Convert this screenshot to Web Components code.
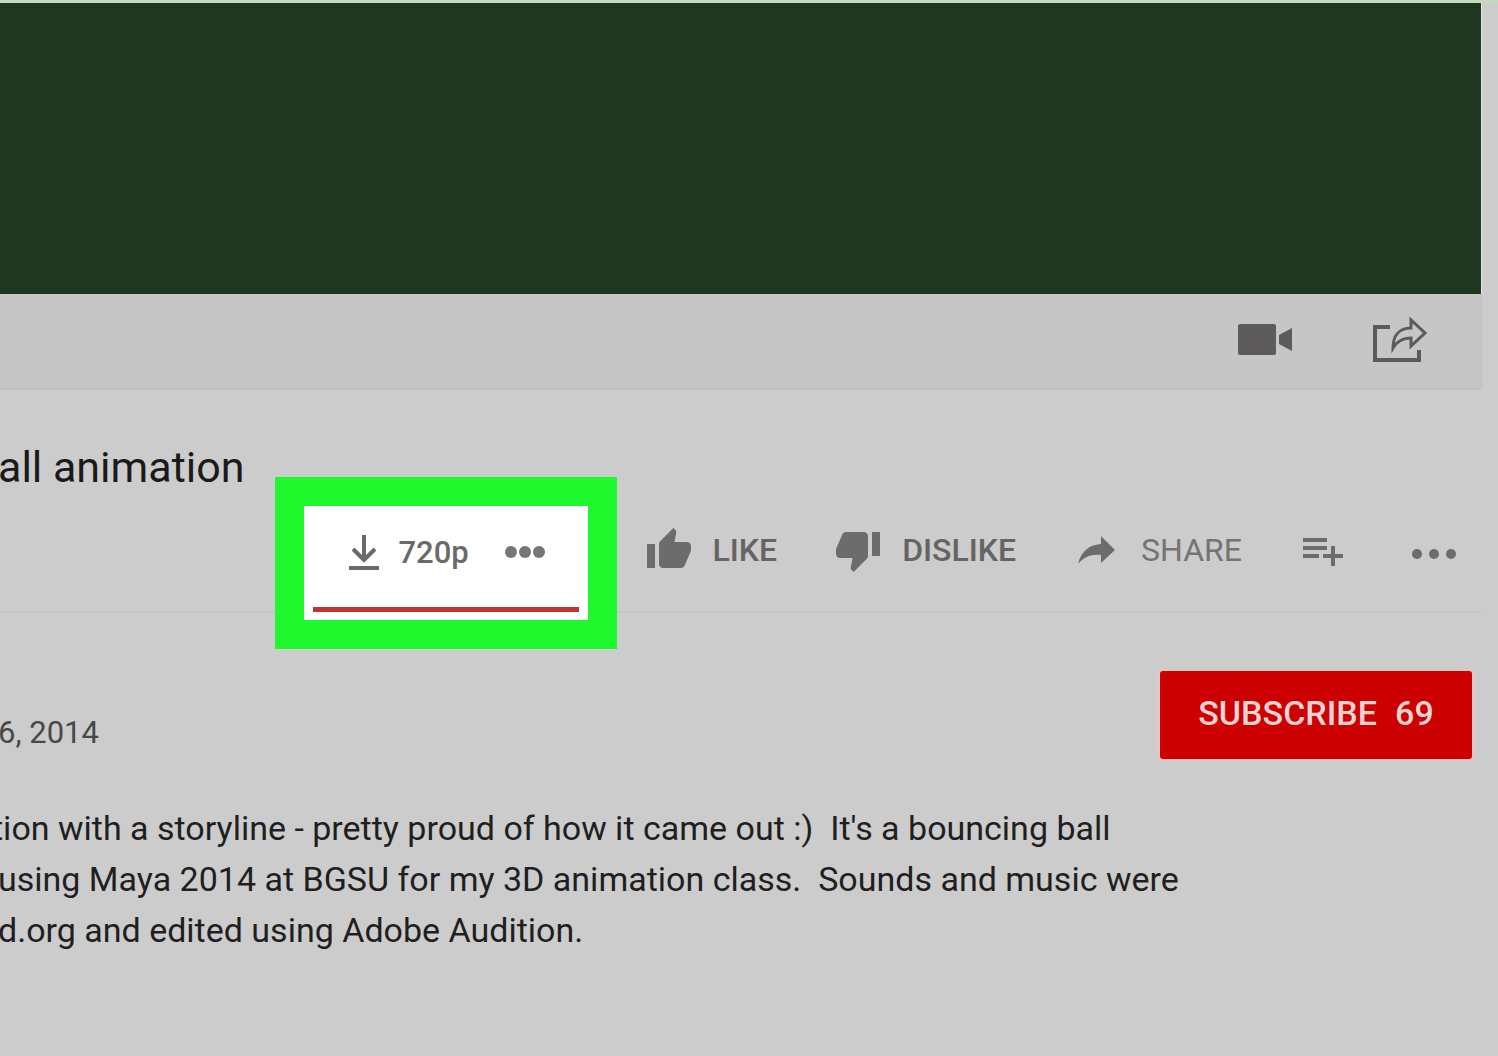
<!DOCTYPE html>
<html lang="en">
<head>
<meta charset="utf-8">
<title>Ball animation</title>
<style>
html, body { margin: 0; min-height: 100%; background: #cccccc; }
body { font-family: Roboto, "Liberation Sans", sans-serif; overflow-x: hidden; }
</style>
</head>
<body>
<watch-page></watch-page>
<script>
const define = (name, html) => {
  const template = document.createElement('template');
  template.innerHTML = html;
  customElements.define(name, class extends HTMLElement {
    constructor() {
      super();
      this.attachShadow({ mode: 'open' }).append(template.content.cloneNode(true));
    }
  });
};

const buttonReset = `button { display: flex; align-items: center; margin: 0; padding: 0; border: 0; background: none; color: inherit; font: inherit; cursor: pointer; }
svg, ::slotted(svg) { display: block; flex: none; }`;

define('video-player', `<style>
:host { display: block; margin-right: 16px; }
.screen { height: 291px; background: #1f3620; border-right: 1px solid #dcebe0; }
.bar { display: flex; justify-content: flex-end; align-items: center; gap: 75px; height: 96px; padding: 0 52px 2px 0; box-sizing: border-box; background: #c7c6c7; border-right: 1px solid #bfbfbf; border-bottom: 2px solid #c0c0c0; border-radius: 0 0 4px 0; color: #5c5a5b; }
${buttonReset}
</style>
<div class="screen"></div>
<div class="bar">
  <button aria-label="Record"><svg width="60" height="60" viewBox="0 0 60 60"><rect x="4" y="14" width="38" height="31" rx="2" fill="currentColor"/><path d="M58 18v23l-13-7v-9z" fill="currentColor"/></svg></button>
  <button aria-label="Share video"><svg width="60" height="60" viewBox="0 0 60 60" fill="none" stroke="currentColor" stroke-width="4"><path d="M21 17H6v33h44V40"/><path d="M42 10v8C30 18 24 26 24 38c4-7 9-10 18-10v8l14-13z" stroke-width="3"/></svg></button>
</div>`);

define('action-button', `<style>
:host { display: block; color: #646464; font-size: 32px; font-weight: 500; line-height: 38px; }
:host([quiet]) { color: #747474; font-weight: 400; }
.body { display: flex; align-items: center; gap: 20px; }
${buttonReset}
button { height: 88px; }
</style><button><span class="body"><slot name="icon"></slot><slot></slot></span></button>`);

define('download-box', `<style>
:host { display: flex; flex-direction: column; justify-content: space-between; box-sizing: border-box; width: 284px; height: 114px; padding: 0 9px 8px; background: #fff; box-shadow: 0 0 0 29px #20f82e; color: #6a6a6a; font-size: 31px; font-weight: 500; }
.row { display: flex; align-items: center; justify-content: space-between; height: 92px; padding: 0 32px 0 33px; }
.line { height: 5px; background: #c13333; }
${buttonReset}
.quality { gap: 17px; }
</style>
<div class="row">
  <button class="quality"><svg width="36" height="40" viewBox="0 0 36 40" fill="none" stroke="currentColor" stroke-width="4"><path d="M18 3v26M7 17l11 11 11-11M3 36h30"/></svg><span>720p</span></button>
  <button aria-label="More formats"><svg width="44" height="20" viewBox="0 0 44 20" fill="#767676"><circle cx="8" cy="10" r="6"/><circle cx="22" cy="10" r="6"/><circle cx="36" cy="10" r="6"/></svg></button>
</div>
<div class="line"></div>`);

define('video-actions', `<style>
:host { display: flex; justify-content: flex-end; align-items: flex-start; gap: 57px; height: 105px; margin-right: 17px; padding-right: 15px; border-bottom: 2px solid #c6c6c6; }
svg { fill: #6c6c6c; display: block; }
</style>
<download-box></download-box>
<action-button><svg slot="icon" width="48" height="48" viewBox="0 0 24 24"><path d="M1 21h4V9H1v12zm22-11c0-1.100-.9-2-2-2h-6.310l.950-4.570.030-.320c0-.410-.170-.790-.440-1.060L14.170 1 7.590 7.590C7.220 7.950 7 8.450 7 9v10c0 1.100.9 2 2 2h9c.830 0 1.540-.5 1.840-1.220l3.020-7.050c.090-.230.140-.470.140-.730v-2z"/></svg>LIKE</action-button>
<action-button><svg slot="icon" width="48" height="48" viewBox="0 0 24 24"><path d="M15 3H6c-.830 0-1.540.5-1.840 1.220l-3.020 7.050c-.090.230-.140.470-.140.730v2c0 1.100.9 2 2 2h6.310l-.950 4.570-.030.320c0 .410.170.790.440 1.060L9.830 23l6.590-6.590c.360-.360.580-.860.580-1.410V5c0-1.100-.9-2-2-2zm4 0v12h4V3h-4z"/></svg>DISLIKE</action-button>
<action-button quiet><svg slot="icon" width="48" height="48" viewBox="0 0 48 48"><path d="M28 10l14 14-14 13v-8C18 28 11 31 5 38c3-12 10-19 23-20z"/></svg>SHARE</action-button>
<action-button quiet><svg slot="icon" role="img" aria-label="Add to playlist" width="48" height="48" viewBox="0 0 24 24"><path d="M14 10H2v2h12v-2zm0-4H2v2h12V6zm4 8v-4h-2v4h-4v2h4v4h2v-4h4v-2h-4zM2 16h8v-2H2v2z"/></svg></action-button>
<action-button quiet><svg slot="icon" role="img" aria-label="More actions" width="62" height="48" viewBox="0 0 62 48"><circle cx="13" cy="28" r="5"/><circle cx="30" cy="28" r="5"/><circle cx="47" cy="28" r="5"/></svg></action-button>`);

define('subscribe-button', `<style>
:host { display: block; }
${buttonReset}
button { justify-content: center; gap: 18px; width: 312px; height: 88px; padding-bottom: 4px; border-radius: 3px; background: #cc0000; box-shadow: 0 0 0 2px #e6c4c2; color: #f5d3d3; font-size: 34px; font-weight: 500; }
</style><button><span>SUBSCRIBE</span><span>69</span></button>`);

define('watch-page', `<style>
:host { display: block; border-top: 3px solid #c5d9bf; --bleed: -2px; }
h1 { margin: 0 0 0 var(--bleed); padding: 51px 0 13px; font-size: 43px; line-height: 52px; font-weight: 400; color: #1a1a1a; }
.meta { display: flex; justify-content: space-between; align-items: flex-start; margin-left: var(--bleed); padding: 58px 26px 0 0; }
.date { padding-top: 42px; font-size: 31px; line-height: 40px; color: #484848; }
.text { margin: 0 0 0 var(--bleed); padding-top: 44px; font-size: 34px; line-height: 51px; color: #1f1f1f; white-space: pre; text-indent: -6px; }
</style>
<video-player></video-player>
<h1>all animation</h1>
<video-actions></video-actions>
<div class="meta"><span class="date">6, 2014</span><subscribe-button></subscribe-button></div>
<p class="text">tion with a storyline - pretty proud of how it came out :)  It's a bouncing ball
using Maya 2014 at BGSU for my 3D animation class.  Sounds and music were
d.org and edited using Adobe Audition.</p>`);
</script>
</body>
</html>
